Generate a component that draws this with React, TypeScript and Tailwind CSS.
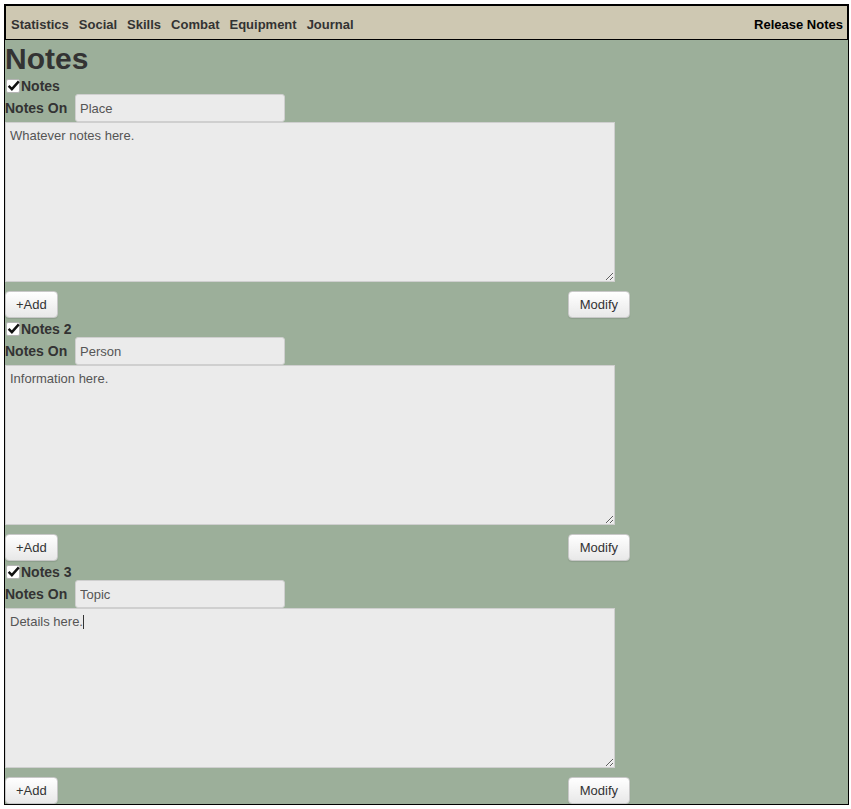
import { useEffect, useRef } from 'react';

const tabs = ['Statistics', 'Social', 'Skills', 'Combat', 'Equipment', 'Journal'];

const notes = [
  { title: 'Notes', topic: 'Place', body: 'Whatever notes here.' },
  { title: 'Notes 2', topic: 'Person', body: 'Information here.' },
  { title: 'Notes 3', topic: 'Topic', body: 'Details here.' },
];

function CheckMark() {
  return (
    <span className="relative inline-block w-[14px] h-[14px] bg-white border border-[#b5b5b5] rounded-[2px] mr-px">
      <svg viewBox="0 0 16 16" className="absolute left-0 -top-[1px] w-[13px] h-[13px]">
        <path d="M2 8.5 L6 12.5 L14.5 3" fill="none" stroke="#111" strokeWidth="3" strokeLinejoin="miter" />
      </svg>
    </span>
  );
}

function NoteBlock({ title, topic, body, focus, last }: { title: string; topic: string; body: string; focus?: boolean; last?: boolean }) {
  const ref = useRef<HTMLTextAreaElement>(null);

  useEffect(() => {
    if (focus && ref.current) {
      ref.current.focus();
      const n = ref.current.value.length;
      ref.current.setSelectionRange(n, n);
    }
  }, [focus]);

  return (
    <div className={last ? '' : 'mb-[2px]'}>
      {/* header */}
      <div className="h-[17px] flex items-center pl-px">
        <CheckMark />
        <span className="text-[14px] font-bold text-[#333] leading-none">{title}</span>
      </div>
      {/* topic */}
      <div className="h-[28px] flex items-center">
        <span className="text-[14px] font-bold text-[#333] w-[70px]">Notes On</span>
        <input
          defaultValue={topic}
          className="w-[210px] h-[28px] bg-[#ebebeb] border border-[#cfcfcf] rounded-[3px] px-[4px] text-[13px] text-[#555] outline-none"
        />
      </div>
      <div className="relative w-[610px]">
        <textarea
          ref={ref}
          defaultValue={body}
          className="block w-[610px] h-[160px] bg-[#ebebeb] border border-[#cfcfcf] px-[4px] pt-[5px] pb-[4px] text-[13px] leading-[15px] text-[#555] outline-none resize"
        />
        {focus && <span className="absolute left-[78px] top-[7px] w-px h-[14px] bg-[#333]" />}
      </div>
      <div className="mt-[9px] w-[625px] flex justify-between">
        <button className="h-[27px] px-[10px] rounded-[4px] border border-[#c8c8c8] bg-gradient-to-b from-white to-[#e8e8e8] text-[13px] text-[#333] shadow-[0_1px_1px_rgba(0,0,0,0.1)]">
          +Add
        </button>
        <button className="h-[27px] px-[11px] rounded-[4px] border border-[#c8c8c8] bg-gradient-to-b from-white to-[#e8e8e8] text-[13px] text-[#333] shadow-[0_1px_1px_rgba(0,0,0,0.1)]">
          Modify
        </button>
      </div>
    </div>
  );
}

export default function App() {
  return (
    <div className="p-[4px] font-['Liberation_Sans',Arial,sans-serif]">
      <div className="w-[845px] border border-black bg-[#9caf9a]">
        {/* Nav */}
        <div className="h-[35px] border border-black bg-[#cec8b2] flex items-center justify-between pl-[5px] pr-[4px] pt-[4px]">
          <div className="flex gap-[10px]">
            {tabs.map((t) => (
              <span key={t} className="text-[13px] font-bold text-[#333]">
                {t}
              </span>
            ))}
          </div>
          <span className="text-[13px] font-bold text-black">Release Notes</span>
        </div>

        <h1 className="text-[30px] font-bold text-[#333] leading-[37px]">Notes</h1>

        {notes.map((n, i) => (
          <NoteBlock key={n.title} {...n} focus={i === 2} last={i === notes.length - 1} />
        ))}
      </div>
    </div>
  );
}
